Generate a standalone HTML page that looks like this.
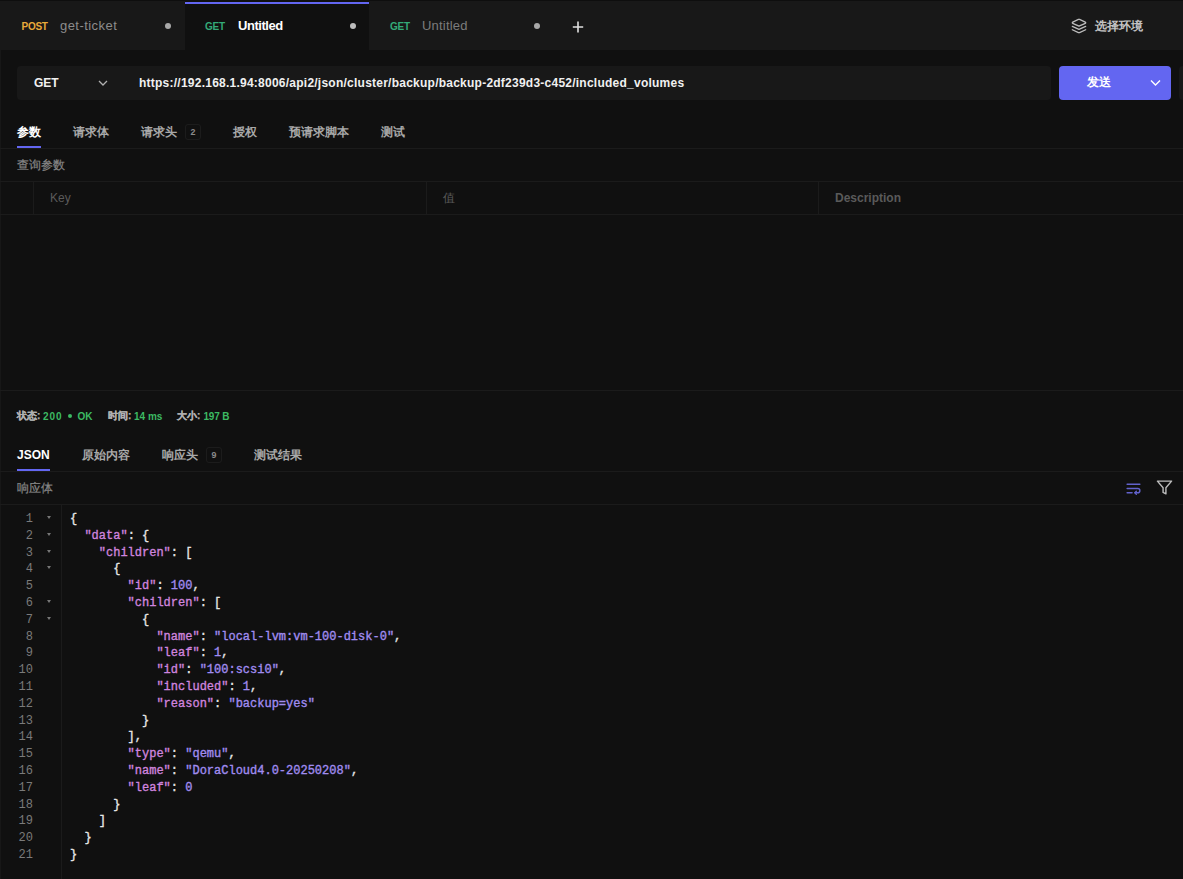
<!DOCTYPE html>
<html><head><meta charset="utf-8">
<style>
*{margin:0;padding:0;box-sizing:border-box}
html,body{width:1183px;height:879px;overflow:hidden;background:#101010;font-family:"Liberation Sans",sans-serif;color:#a3a3a3}
.a{position:absolute;white-space:nowrap}
#tabbar{position:absolute;left:0;top:0;width:1183px;height:50px;background:#181818;border-top:1px solid #0e0e0e}
.tab{position:absolute;top:0;height:50px}
.m{position:absolute;top:20px;font-size:10px;font-weight:bold;line-height:12px}
.tt{position:absolute;top:17px;font-size:13px;line-height:16px;letter-spacing:.2px}
.dot{position:absolute;top:22px;width:6px;height:6px;border-radius:50%;background:#a8a8a8}
.line{position:absolute;background:#1b1b1b}
.code{position:absolute;left:0;top:510px;font-family:"Liberation Mono",monospace;font-size:12px;line-height:16.8px}
.ln{position:absolute;left:0;width:34px;text-align:right;color:#7a7a7a}
.k{color:#cf84de}.s{color:#a08cf0}.n{color:#a08cf0}.p{color:#e6e6e6}.cd{-webkit-text-stroke:0.35px currentColor}
.cl{position:relative;height:16.8px;white-space:pre}
.cl .ln{position:absolute;left:0;top:1px;width:33px;text-align:right;color:#7a7a7a}
.cl .fd{position:absolute;left:47px;top:6px;width:0;height:0;border-left:2px solid transparent;border-right:2px solid transparent;border-top:3px solid #777}
.cl .cd{position:absolute;left:70px;top:1px}
.st{position:absolute;top:409px;font-size:10px;line-height:14px;font-weight:bold;color:#b0b0b0;white-space:nowrap}.sl{-webkit-text-stroke:.25px #b0b0b0}.g{color:#3cba63;top:410px}
.bd{width:16px;height:16px;border:1px solid #1c1c1c;border-radius:3px;font-family:"Liberation Mono",monospace;font-weight:bold;font-size:9px;line-height:15px;padding-top:1px;text-align:center;color:#8a8a8a}
</style></head><body>
<div id="tabbar">
  <div class="tab" style="left:0;width:185px">
    <div class="m" style="left:21.5px;color:#e9aa3a;letter-spacing:-.25px">POST</div>
    <div class="tt" style="left:60px;color:#8c8c8c;letter-spacing:.45px">get-ticket</div>
    <div class="dot" style="left:165px"></div>
  </div>
  <div class="tab" style="left:185px;width:184px;background:#101010;top:-1px;height:51px">
    <div style="position:absolute;left:0;top:2px;width:184px;height:2px;background:#6366f1"></div>
    <div class="m" style="left:20px;top:21px;color:#34aa78;letter-spacing:-.2px">GET</div>
    <div class="tt" style="left:53px;top:18px;color:#fff;font-weight:bold;letter-spacing:-.45px">Untitled</div>
    <div class="dot" style="left:165px;top:23px;background:#bdbdbd"></div>
  </div>
  <div class="tab" style="left:369px;width:184px">
    <div class="m" style="left:21px;color:#34aa78;letter-spacing:-.2px">GET</div>
    <div class="tt" style="left:53px;color:#7c7c7c">Untitled</div>
    <div class="dot" style="left:165px"></div>
  </div>
  <svg class="a" style="left:572px;top:20px" width="12" height="12" viewBox="0 0 12 12"><path d="M6 .5v11M.8 6h10.4" stroke="#e0e0e0" stroke-width="1.6"/></svg>
  <svg class="a" style="left:1071px;top:17px" width="16" height="16" viewBox="0 0 24 24" fill="none" stroke="#bcbcbc" stroke-width="2" stroke-linecap="round" stroke-linejoin="round"><path d="m12.83 2.18a2 2 0 0 0-1.66 0L2.6 6.08a1 1 0 0 0 0 1.83l8.58 3.91a2 2 0 0 0 1.66 0l8.58-3.9a1 1 0 0 0 0-1.83Z"/><path d="m22 17.65-9.17 4.16a2 2 0 0 1-1.66 0L2 17.65"/><path d="m22 12.65-9.17 4.16a2 2 0 0 1-1.66 0L2 12.65"/></svg>
  <div class="a" style="left:1095px;top:17px;font-size:12px;line-height:16px;color:#c4c4c4;font-weight:bold">选择环境</div>
</div>

<div class="a" style="left:0;top:50px;width:1px;height:829px;background:#171717"></div>
<!-- URL bar -->
<div class="a" style="left:17px;top:66px;width:1034px;height:34px;background:#181818;border-radius:4px"></div>
<div class="a" style="left:34px;top:76px;font-size:12px;font-weight:bold;line-height:14px;color:#f0f0f0">GET</div>
<svg class="a" style="left:98px;top:80px" width="10" height="7" viewBox="0 0 10 7"><path d="M1 1l4 4 4-4" fill="none" stroke="#b0b0b0" stroke-width="1.3"/></svg>
<div class="a" style="left:139px;top:76px;font-size:12px;font-weight:bold;line-height:14px;color:#f0f0f0;letter-spacing:.24px">https://192.168.1.94:8006/api2/json/cluster/backup/backup-2df239d3-c452/included_volumes</div>
<div class="a" style="left:1059px;top:66px;width:112px;height:34px;background:#6366f1;border-radius:4px"></div>
<div class="a" style="left:1087px;top:74px;font-size:12px;font-weight:bold;line-height:16px;color:#fff">发送</div>
<svg class="a" style="left:1150px;top:79px" width="11" height="8" viewBox="0 0 11 8"><path d="M1 1.5l4.5 4.5 4.5-4.5" fill="none" stroke="#fff" stroke-width="1.4"/></svg>
<div class="a" style="left:1179px;top:66px;width:20px;height:34px;background:#181818;border-radius:4px"></div>

<!-- request tabs -->
<div class="a" style="left:17px;top:124px;font-size:12px;line-height:16px;color:#fff;font-weight:bold">参数</div>
<div class="a" style="left:17px;top:146px;width:24px;height:2px;background:#6366f1"></div>
<div class="a" style="left:73px;top:124px;font-size:12px;line-height:16px;color:#a8a8a8;font-weight:bold">请求体</div>
<div class="a" style="left:141px;top:124px;font-size:12px;line-height:16px;color:#a8a8a8;font-weight:bold">请求头</div>
<div class="a bd" style="left:185px;top:124px">2</div>
<div class="a" style="left:233px;top:124px;font-size:12px;line-height:16px;color:#a8a8a8;font-weight:bold">授权</div>
<div class="a" style="left:289px;top:124px;font-size:12px;line-height:16px;color:#a8a8a8;font-weight:bold">预请求脚本</div>
<div class="a" style="left:381px;top:124px;font-size:12px;line-height:16px;color:#a8a8a8;font-weight:bold">测试</div>
<div class="line" style="left:0;top:148px;width:1183px;height:1px"></div>
<div class="a" style="left:17px;top:157px;font-size:12px;line-height:16px;color:#868686;-webkit-text-stroke:.2px #868686">查询参数</div>
<div class="line" style="left:0;top:181px;width:1183px;height:1px"></div>
<div class="line" style="left:33px;top:182px;width:1px;height:32px"></div>
<div class="line" style="left:426px;top:182px;width:1px;height:32px"></div>
<div class="line" style="left:818px;top:182px;width:1px;height:32px"></div>
<div class="line" style="left:0;top:214px;width:1183px;height:1px"></div>
<div class="a" style="left:50px;top:190px;font-size:12px;line-height:16px;color:#5a5a5a">Key</div>
<div class="a" style="left:443px;top:190px;font-size:12px;line-height:16px;color:#5a5a5a">值</div>
<div class="a" style="left:835px;top:190px;font-size:12px;line-height:16px;color:#5a5a5a;font-weight:bold">Description</div>

<div class="line" style="left:0;top:390px;width:1183px;height:1px"></div>
<!-- status -->
<div class="st sl" style="left:17px">状态:</div>
<div class="st g" style="left:43px;letter-spacing:.9px">200</div>
<div class="a" style="left:68px;top:414px;width:4px;height:4px;border-radius:50%;background:#3cba63"></div>
<div class="st g" style="left:77.5px">OK</div>
<div class="st sl" style="left:108px">时间:</div>
<div class="st g" style="left:134px">14 ms</div>
<div class="st sl" style="left:177px">大小:</div>
<div class="st g" style="left:203.5px;letter-spacing:-.2px">197 B</div>
<!-- response tabs -->
<div class="a" style="left:17px;top:447px;font-size:12px;line-height:16px;color:#fff;font-weight:bold">JSON</div>
<div class="a" style="left:17px;top:469px;width:33px;height:2px;background:#6366f1"></div>
<div class="a" style="left:82px;top:447px;font-size:12px;line-height:16px;color:#a8a8a8;font-weight:bold">原始内容</div>
<div class="a" style="left:162px;top:447px;font-size:12px;line-height:16px;color:#a8a8a8;font-weight:bold">响应头</div>
<div class="a bd" style="left:206px;top:447px">9</div>
<div class="a" style="left:254px;top:447px;font-size:12px;line-height:16px;color:#a8a8a8;font-weight:bold">测试结果</div>
<div class="line" style="left:0;top:471px;width:1183px;height:1px"></div>
<div class="a" style="left:17px;top:480px;font-size:12px;line-height:16px;color:#868686;-webkit-text-stroke:.2px #868686">响应体</div>
<svg class="a" style="left:1125px;top:480px" width="17" height="17" viewBox="0 0 24 24" fill="none" stroke="#6262cc" stroke-width="2" stroke-linecap="round" stroke-linejoin="round"><line x1="3" x2="21" y1="6" y2="6"/><path d="M3 12h15a3 3 0 1 1 0 6h-4"/><polyline points="16 16 14 18 16 20"/><line x1="3" x2="10" y1="18" y2="18"/></svg>
<svg class="a" style="left:1156px;top:479px" width="17" height="17" viewBox="0 0 24 24" fill="none" stroke="#bcbcbc" stroke-width="2" stroke-linecap="round" stroke-linejoin="round"><polygon points="22 3 2 3 10 12.46 10 19 14 21 14 12.46 22 3"/></svg>
<div class="line" style="left:0;top:504px;width:1183px;height:1px"></div>
<div class="line" style="left:61px;top:505px;width:1px;height:374px"></div>

<div class="code">
<div class="cl"><span class="ln">1</span><i class="fd"></i><span class="cd"><span class="p">{</span></span></div>
<div class="cl"><span class="ln">2</span><i class="fd"></i><span class="cd">  <span class="k">&quot;data&quot;</span><span class="p">:</span> <span class="p">{</span></span></div>
<div class="cl"><span class="ln">3</span><i class="fd"></i><span class="cd">    <span class="k">&quot;children&quot;</span><span class="p">:</span> <span class="p">[</span></span></div>
<div class="cl"><span class="ln">4</span><i class="fd"></i><span class="cd"><span class="p">      {</span></span></div>
<div class="cl"><span class="ln">5</span><span class="cd">        <span class="k">&quot;id&quot;</span><span class="p">:</span> <span class="n">100</span><span class="p">,</span></span></div>
<div class="cl"><span class="ln">6</span><i class="fd"></i><span class="cd">        <span class="k">&quot;children&quot;</span><span class="p">:</span> <span class="p">[</span></span></div>
<div class="cl"><span class="ln">7</span><i class="fd"></i><span class="cd"><span class="p">          {</span></span></div>
<div class="cl"><span class="ln">8</span><span class="cd">            <span class="k">&quot;name&quot;</span><span class="p">:</span> <span class="s">&quot;local-lvm:vm-100-disk-0&quot;</span><span class="p">,</span></span></div>
<div class="cl"><span class="ln">9</span><span class="cd">            <span class="k">&quot;leaf&quot;</span><span class="p">:</span> <span class="n">1</span><span class="p">,</span></span></div>
<div class="cl"><span class="ln">10</span><span class="cd">            <span class="k">&quot;id&quot;</span><span class="p">:</span> <span class="s">&quot;100:scsi0&quot;</span><span class="p">,</span></span></div>
<div class="cl"><span class="ln">11</span><span class="cd">            <span class="k">&quot;included&quot;</span><span class="p">:</span> <span class="n">1</span><span class="p">,</span></span></div>
<div class="cl"><span class="ln">12</span><span class="cd">            <span class="k">&quot;reason&quot;</span><span class="p">:</span> <span class="s">&quot;backup=yes&quot;</span><span class="p"></span></span></div>
<div class="cl"><span class="ln">13</span><span class="cd"><span class="p">          }</span></span></div>
<div class="cl"><span class="ln">14</span><span class="cd"><span class="p">        ],</span></span></div>
<div class="cl"><span class="ln">15</span><span class="cd">        <span class="k">&quot;type&quot;</span><span class="p">:</span> <span class="s">&quot;qemu&quot;</span><span class="p">,</span></span></div>
<div class="cl"><span class="ln">16</span><span class="cd">        <span class="k">&quot;name&quot;</span><span class="p">:</span> <span class="s">&quot;DoraCloud4.0-20250208&quot;</span><span class="p">,</span></span></div>
<div class="cl"><span class="ln">17</span><span class="cd">        <span class="k">&quot;leaf&quot;</span><span class="p">:</span> <span class="n">0</span><span class="p"></span></span></div>
<div class="cl"><span class="ln">18</span><span class="cd"><span class="p">      }</span></span></div>
<div class="cl"><span class="ln">19</span><span class="cd"><span class="p">    ]</span></span></div>
<div class="cl"><span class="ln">20</span><span class="cd"><span class="p">  }</span></span></div>
<div class="cl"><span class="ln">21</span><span class="cd"><span class="p">}</span></span></div>
</div>
</body></html>
